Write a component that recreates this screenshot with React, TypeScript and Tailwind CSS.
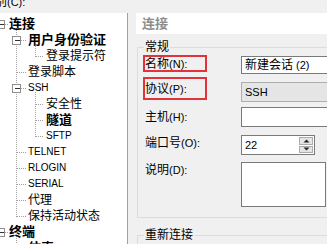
import type { ReactNode } from 'react'

type Guide = 'full' | 'top' | 'bottom' | null

interface TreeRow {
  text: ReactNode
  x: number
  bold?: boolean
  latin?: boolean
  box?: number
  g1?: Guide
  g2?: Guide
  h: [number, number]
}

const DOT = '#a0a0a0'

const ROWS: TreeRow[] = [
  { text: '连接', x: 9, bold: true, box: 0.5, g1: 'bottom', h: [5, 8] },
  { text: '用户身份验证', x: 28, bold: true, box: 16.5, g1: 'full', g2: 'bottom', h: [21, 26] },
  { text: '登录提示符', x: 46, g1: 'full', g2: 'top', h: [36, 44] },
  { text: '登录脚本', x: 28, g1: 'full', h: [17, 26] },
  { text: 'SSH', x: 28, latin: true, box: 16.5, g1: 'full', g2: 'bottom', h: [21, 26] },
  { text: '安全性', x: 46, g1: 'full', g2: 'full', h: [36, 44] },
  { text: '隧道', x: 46, bold: true, g1: 'full', g2: 'full', h: [36, 44] },
  { text: 'SFTP', x: 46, latin: true, g1: 'full', g2: 'top', h: [36, 44] },
  { text: 'TELNET', x: 28, latin: true, g1: 'full', h: [17, 26] },
  { text: 'RLOGIN', x: 28, latin: true, g1: 'full', h: [17, 26] },
  { text: 'SERIAL', x: 28, latin: true, g1: 'full', h: [17, 26] },
  { text: '代理', x: 28, g1: 'full', h: [17, 26] },
  { text: '保持活动状态', x: 28, g1: 'top', h: [17, 26] },
  { text: '终端', x: 9, bold: true, box: 0.5, g1: 'bottom', h: [5, 8] },
  { text: '仿真', x: 28, bold: true, g1: 'full', h: [17, 26] },
]

function vLine(x: number, g?: Guide) {
  if (!g) return null
  const [y1, y2] = g === 'full' ? [0, 16] : g === 'top' ? [0, 9] : [12, 16]
  return <line x1={x} x2={x} y1={y1} y2={y2} stroke={DOT} strokeDasharray="1 1" />
}

function TreeItem({ row }: { row: TreeRow }) {
  const size = row.bold ? 'text-[13px] font-bold' : row.latin ? 'text-[10px]' : 'text-[12px]'
  return (
    <div className="flex h-[16px] items-center">
      <svg width={row.x} height={16} className="shrink-0 overflow-visible" shapeRendering="crispEdges">
        {vLine(16.5, row.g1)}
        {vLine(35.5, row.g2)}
        <line x1={row.h[0]} x2={row.h[1]} y1={8.5} y2={8.5} stroke={DOT} strokeDasharray="1 1" />
        {row.box !== undefined && (
          <g>
            <rect x={row.box - 4} y={4.5} width={8} height={8} fill="#fff" stroke="#8e8e8e" />
            <line x1={row.box - 2} x2={row.box + 3} y1={8.5} y2={8.5} stroke="#333" />
          </g>
        )}
      </svg>
      <span className={`whitespace-nowrap leading-[16px] text-black ${size}`}>{row.text}</span>
    </div>
  )
}

function Lbl({ cjk, k }: { cjk: string; k: string }) {
  return (
    <span className="whitespace-nowrap text-[12px] leading-[14px] text-black">
      {cjk}
      <span className="text-[11px]">({k}):</span>
    </span>
  )
}

function Arrow({ up }: { up?: boolean }) {
  return (
    <svg width="7" height="4" viewBox="0 0 7 4">
      <path d={up ? 'M0.5 3.5 L3.5 0.5 L6.5 3.5 Z' : 'M0.5 0.5 L3.5 3.5 L6.5 0.5 Z'} fill="#222" />
    </svg>
  )
}

export default function App() {
  return (
    <div className="flex h-[244px] w-[327px] flex-col overflow-hidden bg-[#f0f0f0] font-['Liberation_Sans','Noto_Sans_CJK_SC',sans-serif]">
      <div className="h-[13px] shrink-0 overflow-hidden">
        <div className="-ml-[17px] -mt-[6px] whitespace-nowrap text-[12px] leading-[16px] text-black">
          类别<span className="text-[11px]">(C):</span>
        </div>
      </div>

      <div className="flex min-h-0 flex-1">
        <div className="w-[128px] shrink-0 overflow-hidden border-r border-[#a0a0a0] bg-white pt-[3px]">
          {ROWS.map((r, i) => (
            <TreeItem key={i} row={r} />
          ))}
        </div>

        <div className="min-w-0 flex-1 overflow-hidden pl-[8px]">
          <div className="h-[21px] w-[220px] bg-white pl-[6px] text-[13px] font-semibold leading-[21px] text-[#8c8c8c]">
            连接
          </div>

          <fieldset className="ml-[1px] mt-[5px] w-[200px] border border-[#dcdcdc] pb-[10px]">
            <legend className="ml-[6px] px-[1px] text-[12px] leading-[16px] text-black">常规</legend>

            <div className="flex h-[22px] items-start">
              <div className="w-[103px] shrink-0 pl-[5px]">
                <div className="flex h-[17px] w-[64px] items-center border-2 border-[#e2323a]">
                  <Lbl cjk="名称" k="N" />
                </div>
              </div>
              <div className="mt-[1px] flex h-[18px] flex-1 items-center border border-[#7a7a7a] bg-white pl-[3px] text-[12px] text-black">
                新建会话 <span className="ml-[3px] text-[11px]">(2)</span>
              </div>
            </div>

            <div className="flex h-[28px] items-start">
              <div className="w-[103px] shrink-0 pl-[5px]">
                <div className="flex h-[23px] w-[64px] items-center border-2 border-[#e2323a]">
                  <Lbl cjk="协议" k="P" />
                </div>
              </div>
              <div className="mt-[5px] flex h-[20px] flex-1 items-center border border-[#adadad] bg-[#e5e5e5] pl-[3px] text-[11px] text-black">
                SSH
              </div>
            </div>

            <div className="flex h-[28px] items-start">
              <div className="mt-[2px] flex h-[20px] w-[103px] shrink-0 items-center pl-[7px]">
                <Lbl cjk="主机" k="H" />
              </div>
              <div className="mt-[2px] h-[20px] flex-1 border border-[#7a7a7a] bg-white" />
            </div>

            <div className="flex h-[27px] items-start">
              <div className="flex h-[20px] w-[103px] shrink-0 items-center pl-[7px]">
                <Lbl cjk="端口号" k="O" />
              </div>
              <div className="mt-[2px] flex h-[20px] w-[74px] border border-[#7a7a7a] bg-white">
                <div className="flex flex-1 items-center pl-[3px] text-[11px] text-black">22</div>
                <div className="flex w-[16px] flex-col gap-[1px] p-[1px]">
                  <div className="flex flex-1 items-center justify-center border border-[#acacac] bg-[#e5e5e5]">
                    <Arrow up />
                  </div>
                  <div className="flex flex-1 items-center justify-center border border-[#acacac] bg-[#e5e5e5]">
                    <Arrow />
                  </div>
                </div>
              </div>
            </div>

            <div className="flex items-start">
              <div className="mt-[2px] flex h-[16px] w-[103px] shrink-0 items-center pl-[7px]">
                <Lbl cjk="说明" k="D" />
              </div>
              <div className="mt-[2px] h-[45px] w-[85px] border border-[#7a7a7a] bg-white" />
            </div>
          </fieldset>

          <fieldset className="ml-[1px] mt-[9px] h-[40px] w-[200px] border border-[#dcdcdc]">
            <legend className="ml-[6px] px-[1px] text-[12px] leading-[16px] text-black">重新连接</legend>
          </fieldset>
        </div>
      </div>
    </div>
  )
}
